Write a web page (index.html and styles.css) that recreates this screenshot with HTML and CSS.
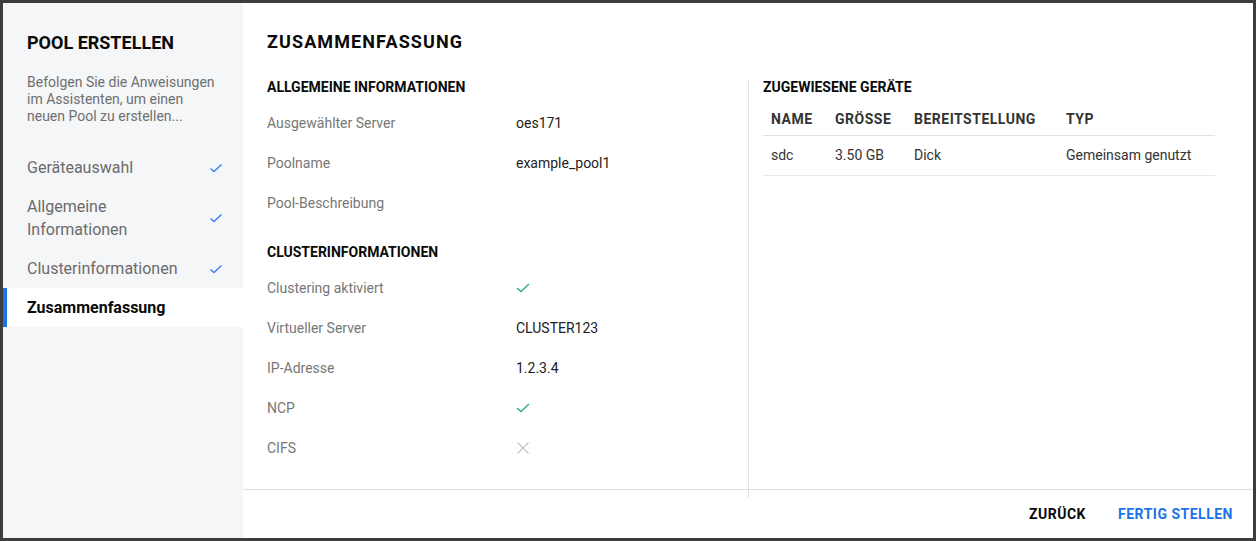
FILE: index.html
```html
<!DOCTYPE html>
<html lang="de">
<head>
    <meta charset="UTF-8">
    <meta name="viewport" content="width=device-width, initial-scale=1.0">
    <title>Pool erstellen</title>
    <link rel="stylesheet" href="styles.css">
</head>
<body>
    <div class="dialog">
        <aside class="sidebar">
            <h1 class="sidebar-title">POOL ERSTELLEN</h1>
            <p class="sidebar-desc">Befolgen Sie die Anweisungen im Assistenten, um einen neuen Pool zu erstellen...</p>
            <ul class="steps">
                <li class="step">
                    <span class="step-label">Geräteauswahl</span>
                    <svg class="step-check" viewBox="0 0 14 14"><path d="M1.5 7.5 L5 10.5 L12.5 3.5"/></svg>
                </li>
                <li class="step">
                    <span class="step-label">Allgemeine Informationen</span>
                    <svg class="step-check" viewBox="0 0 14 14"><path d="M1.5 7.5 L5 10.5 L12.5 3.5"/></svg>
                </li>
                <li class="step">
                    <span class="step-label">Clusterinformationen</span>
                    <svg class="step-check" viewBox="0 0 14 14"><path d="M1.5 7.5 L5 10.5 L12.5 3.5"/></svg>
                </li>
                <li class="step active">
                    <span class="step-label">Zusammenfassung</span>
                </li>
            </ul>
        </aside>

        <main class="main">
            <h2 class="main-title">ZUSAMMENFASSUNG</h2>

            <div class="columns">
                <section class="col col-info">
                    <h3 class="section-title">ALLGEMEINE INFORMATIONEN</h3>
                    <div class="info-list">
                        <div class="info-row"><span class="info-label">Ausgewählter Server</span><span class="info-value">oes171</span></div>
                        <div class="info-row"><span class="info-label">Poolname</span><span class="info-value">example_pool1</span></div>
                        <div class="info-row"><span class="info-label">Pool-Beschreibung</span><span class="info-value"></span></div>
                    </div>

                    <h3 class="section-title section-gap">CLUSTERINFORMATIONEN</h3>
                    <div class="info-list">
                        <div class="info-row">
                            <span class="info-label">Clustering aktiviert</span>
                            <span class="info-value"><svg class="icon-yes" viewBox="0 0 14 14"><path d="M1 7 L5 10.5 L13 3"/></svg></span>
                        </div>
                        <div class="info-row"><span class="info-label">Virtueller Server</span><span class="info-value">CLUSTER123</span></div>
                        <div class="info-row"><span class="info-label">IP-Adresse</span><span class="info-value">1.2.3.4</span></div>
                        <div class="info-row">
                            <span class="info-label">NCP</span>
                            <span class="info-value"><svg class="icon-yes" viewBox="0 0 14 14"><path d="M1 7 L5 10.5 L13 3"/></svg></span>
                        </div>
                        <div class="info-row">
                            <span class="info-label">CIFS</span>
                            <span class="info-value"><svg class="icon-no" viewBox="0 0 14 14"><path d="M1.5 1.5 L12.5 12.5 M12.5 1.5 L1.5 12.5"/></svg></span>
                        </div>
                    </div>
                </section>

                <section class="col col-devices">
                    <h3 class="section-title">ZUGEWIESENE GERÄTE</h3>
                    <table class="devices">
                        <thead>
                            <tr>
                                <th class="c-name">NAME</th>
                                <th class="c-size">GRÖSSE</th>
                                <th class="c-prov">BEREITSTELLUNG</th>
                                <th>TYP</th>
                            </tr>
                        </thead>
                        <tbody>
                            <tr>
                                <td>sdc</td>
                                <td>3.50 GB</td>
                                <td>Dick</td>
                                <td>Gemeinsam genutzt</td>
                            </tr>
                        </tbody>
                    </table>
                </section>
            </div>

            <footer class="footer">
                <button class="btn">ZURÜCK</button>
                <button class="btn btn-primary">FERTIG STELLEN</button>
            </footer>
        </main>
    </div>
</body>
</html>
```

FILE: styles.css
```css
* {
    margin: 0;
    padding: 0;
    box-sizing: border-box;
}

body {
    font-family: Roboto, "Liberation Sans", Arial, sans-serif;
    background: #3d3d3d;
    padding: 3px 3px 3px 3px;
    color: #212121;
}

.dialog {
    display: flex;
    width: 1250px;
    height: 535px;
    background: #fff;
}

/* left wizard panel */
.sidebar {
    flex: 0 0 240px;
    background: #f5f6f8;
    padding-top: 28px;
}

.sidebar-title {
    margin: 0 24px;
    font-size: 18px;
    line-height: 24px;
    font-weight: 700;
    color: #0a0a0a;
}

.sidebar-desc {
    margin: 19px 24px 0;
    font-size: 14px;
    line-height: 17px;
    color: #6f6f6f;
}

.steps {
    list-style: none;
    margin-top: 23px;
}

.step {
    display: flex;
    align-items: center;
    padding: 8px 20px 8px 24px;
    font-size: 16px;
    line-height: 23px;
    color: #6b6b6b;
}

.step-label {
    flex: 1;
    padding-right: 12px;
}

.step-check {
    width: 14px;
    height: 14px;
    fill: none;
    stroke: #3b82f0;
    stroke-width: 1.4;
}

.step.active {
    background: #fff;
    box-shadow: inset 4px 0 0 #1a73e8;
    color: #0a0a0a;
    font-weight: 700;
}

/* summary */
.main {
    flex: 1;
    display: flex;
    flex-direction: column;
    padding-top: 21px;
}

.main-title {
    margin: 0 24px 20px;
    font-size: 18px;
    line-height: 36px;
    font-weight: 700;
    letter-spacing: 1.1px;
    color: #0a0a0a;
}

.columns {
    flex: 1;
    display: flex;
    margin: 0 24px;
}

.col-info {
    flex: 0 0 481px;
}

.col-devices {
    flex: 1;
    min-width: 0;
    border-left: 1px solid #e2e2e2;
    padding: 0 14px;
}

.section-title {
    font-size: 14px;
    line-height: 14px;
    font-weight: 700;
    color: #0a0a0a;
}

.section-gap {
    margin-top: 22px;
}

.info-list {
    margin-top: 9px;
}

.info-row {
    display: flex;
    align-items: center;
    height: 40px;
    font-size: 14px;
}

.info-label {
    flex: 0 0 249px;
    color: #777;
}

.info-value {
    color: #222;
    display: flex;
}

.icon-yes, .icon-no {
    width: 14px;
    height: 14px;
    fill: none;
    stroke-width: 1.4;
}

.icon-yes {
    stroke: #2bb27c;
}

.icon-no {
    stroke: #c2c2c2;
    stroke-width: 1.2;
}

.devices {
    width: 100%;
    margin-top: 9px;
    border-collapse: collapse;
    font-size: 14px;
    text-align: left;
}

.devices th {
    height: 32px;
    padding: 8px 8px 0;
    font-size: 14px;
    font-weight: 700;
    letter-spacing: 0.5px;
    color: #333;
    border-bottom: 1px solid #e0e0e0;
    vertical-align: top;
}

.devices td {
    height: 40px;
    padding: 0 8px;
    color: #333;
    border-bottom: 1px solid #e8e8e8;
}

.c-name { width: 64px; }
.c-size { width: 79px; }
.c-prov { width: 152px; }

/* action bar */
.footer {
    display: flex;
    justify-content: flex-end;
    align-items: center;
    gap: 32px;
    height: 49px;
    margin-top: -9px;
    padding-right: 20px;
    border-top: 1px solid #e0e0e0;
}

.btn {
    background: none;
    border: none;
    font-family: inherit;
    font-size: 14px;
    font-weight: 700;
    letter-spacing: 0.5px;
    color: #0a0a0a;
    cursor: pointer;
}

.btn-primary {
    color: #1a73e8;
}
```
